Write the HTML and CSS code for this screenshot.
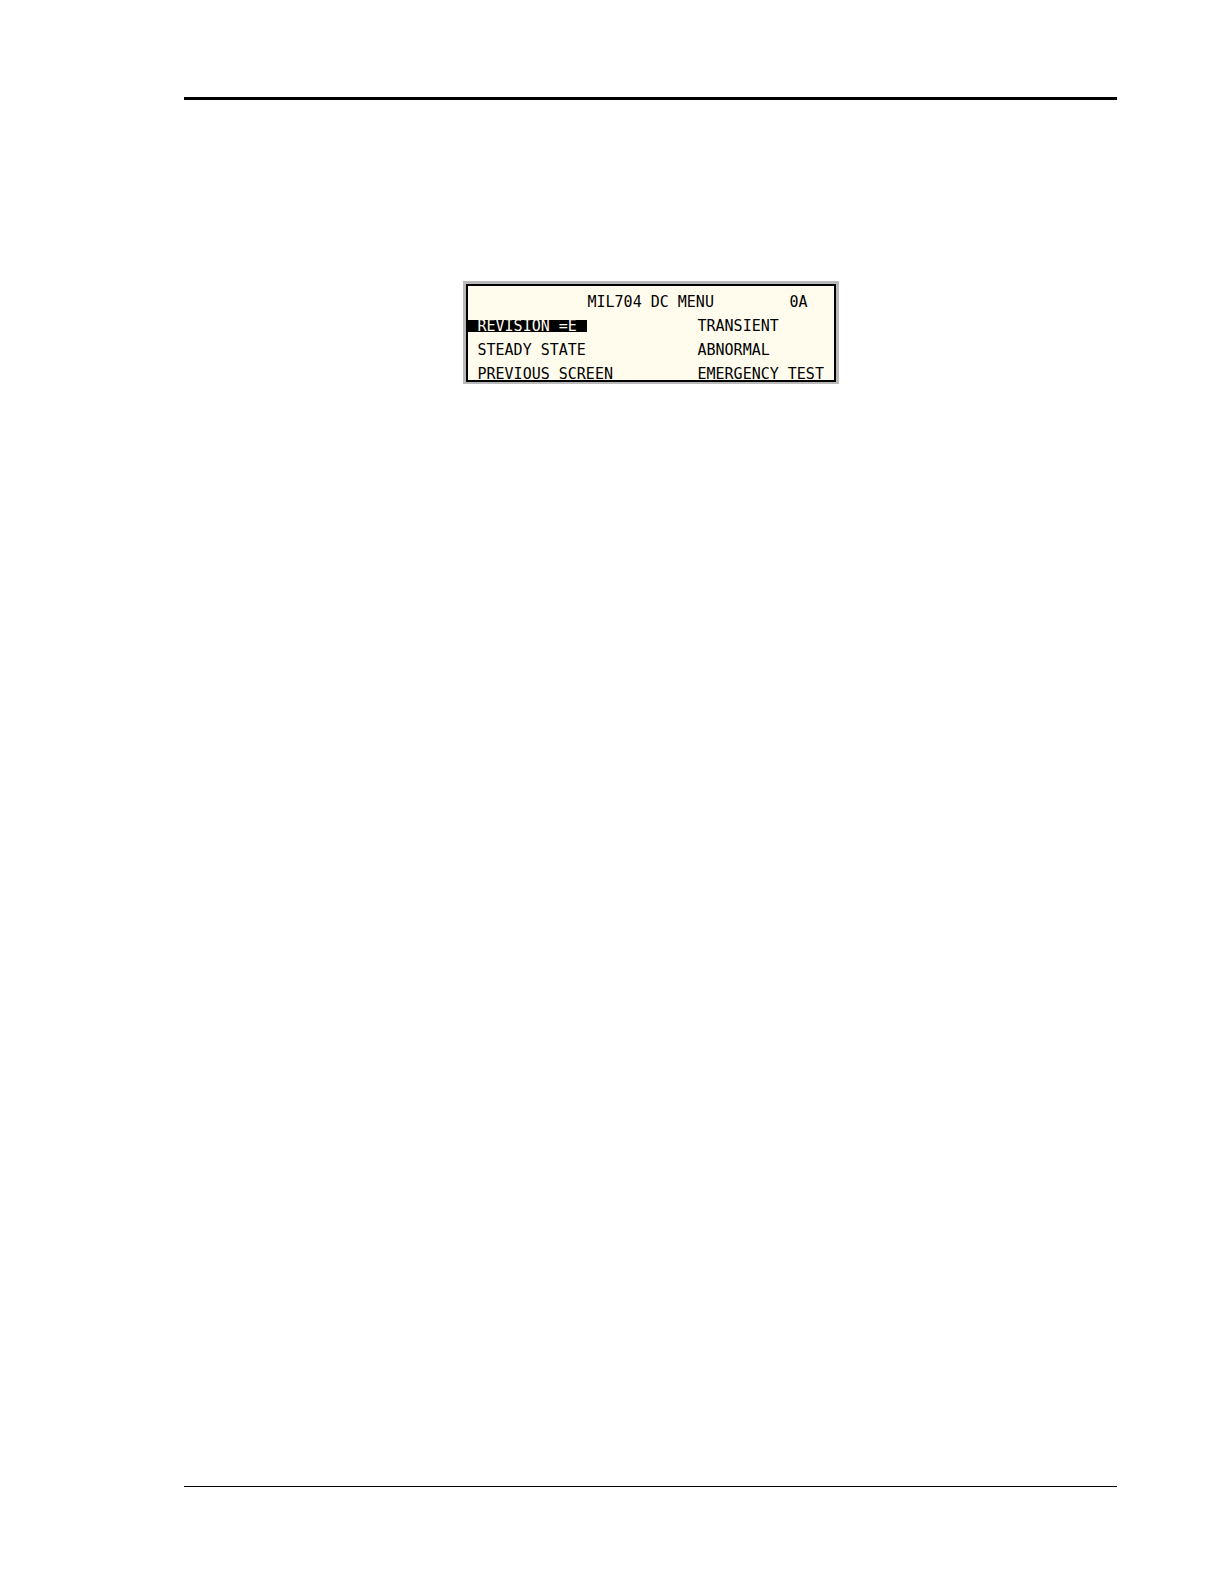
FILE: index.html
```
<!DOCTYPE html>
<html lang="en">
<head>
    <meta charset="UTF-8">
    <meta name="viewport" content="width=device-width, initial-scale=1.0">
    <title>MIL704 DC Menu</title>
    <link rel="stylesheet" href="styles.css">
</head>
<body>
    <hr class="rule rule-top">

    <main class="content">
        <!-- LCD menu -->
        <div class="lcd">
            <div class="screen">
                <span class="title">MIL704 DC MENU</span>
                <span class="code">0A</span>
                <button type="button" class="item left selected">REVISION =E</button>
                <button type="button" class="item right">TRANSIENT</button>
                <button type="button" class="item left">STEADY STATE</button>
                <button type="button" class="item right">ABNORMAL</button>
                <button type="button" class="item left">PREVIOUS SCREEN</button>
                <button type="button" class="item right">EMERGENCY TEST</button>
            </div>
        </div>
    </main>

    <hr class="rule rule-bottom">
</body>
</html>
```

FILE: styles.css
```
* {
    box-sizing: border-box;
}

body {
    display: flex;
    flex-direction: column;
    min-height: 100vh;
    margin: 0;
    padding: 97px 107px 97px 184px;
    background: #fff;
    color: #000;
}

.rule {
    width: 100%;
    margin: 0;
    border: none;
    background: #000;
}

.rule-top {
    height: 3px;
}

.rule-bottom {
    height: 1px;
}

.content {
    flex: 1;
    padding-top: 181px;
}

.lcd {
    max-width: 376px;
    margin: 0 auto;
    border: 3px solid #b9b9b9;
    border-bottom-width: 2px;
}

/* four text columns, one 12px line per row */
.screen {
    display: grid;
    grid-template-columns: 120px 110px 92px 1fr;
    grid-auto-rows: 12px;
    row-gap: 12px;
    padding-top: 10px;
    border: 2px solid #000;
    background: #fffcee;
    color: #000;
    font-family: "DejaVu Sans Mono", monospace;
    font-size: 15px;
    line-height: 12px;
    white-space: nowrap;
}

.title {
    grid-column: 2 / 4;
}

.code {
    grid-column: 4;
}

.item {
    margin: 0;
    padding: 0;
    border: none;
    background: none;
    color: inherit;
    font: inherit;
    text-align: left;
    cursor: pointer;
}

.left {
    grid-column: 1 / 3;
    justify-self: start;
    padding-left: 10px;
}

.right {
    grid-column: 3 / 5;
}

.selected {
    padding-right: 10px;
    background: #000;
    color: #fffcee;
}
```
